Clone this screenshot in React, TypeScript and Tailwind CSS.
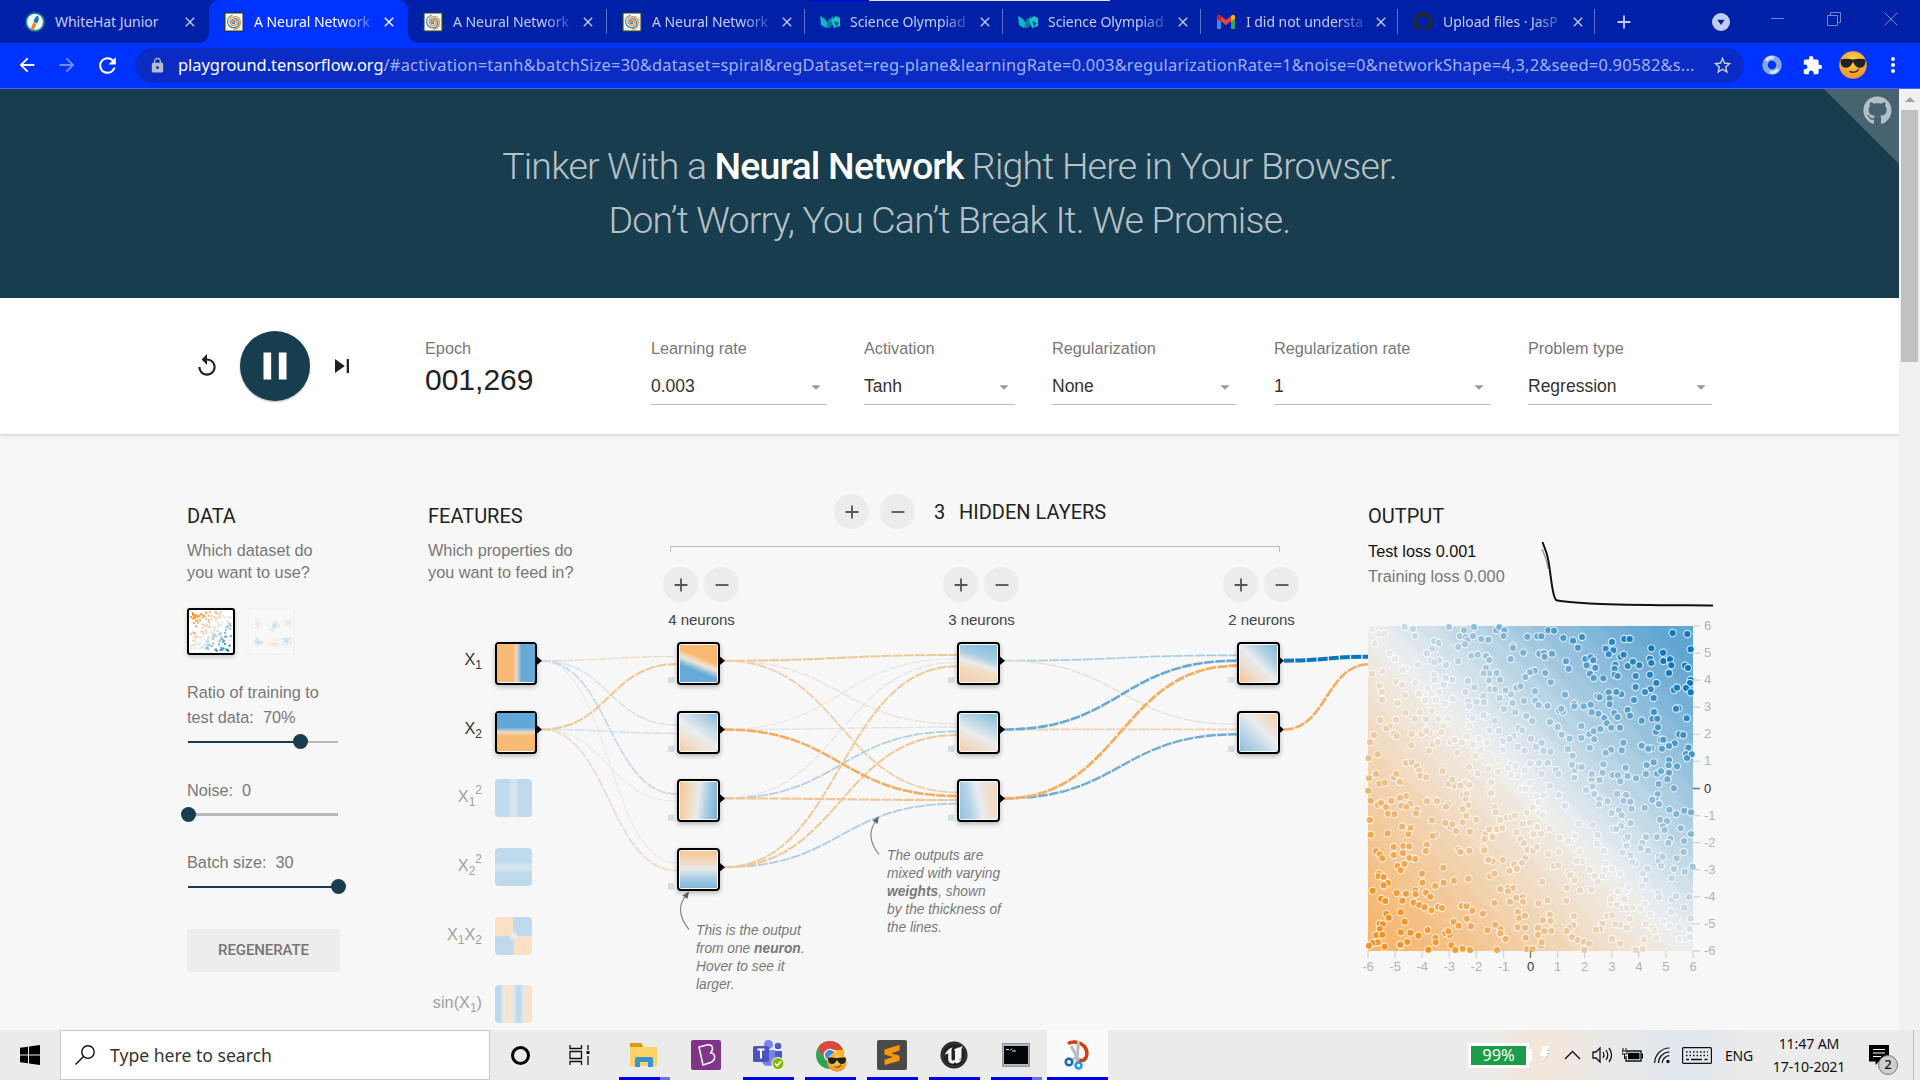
import React from "react";
import {
  MdAdd, MdArrowBack, MdArrowForward, MdArrowDropDown, MdClose, MdExtension, MdLock,
  MdMoreVert, MdPause, MdRefresh, MdRemove, MdReplay, MdSkipNext, MdStarBorder,
} from "react-icons/md";
import { FaGithub } from "react-icons/fa";

const UI = "font-['Noto_Sans',sans-serif]";

/* ---------- colour scale ---------- */
type RGB = [number, number, number];
const ORANGE: RGB = [245, 147, 34];
const NEUTRAL: RGB = [232, 234, 235];
const BLUE: RGB = [8, 119, 189];
const mix = (a: RGB, b: RGB, t: number): RGB => [a[0] + (b[0] - a[0]) * t, a[1] + (b[1] - a[1]) * t, a[2] + (b[2] - a[2]) * t];
const css = (c: RGB) => `rgb(${c.map((v) => Math.round(v)).join(",")})`;
const scale = (v: number): RGB => {
  const t = Math.max(-1, Math.min(1, v));
  return t < 0 ? mix(NEUTRAL, ORANGE, -t) : mix(NEUTRAL, BLUE, t);
};
const soft = (v: number) => css(mix([247, 247, 247], scale(v), 0.63));

/* ---------- browser chrome ---------- */
const Spiral = () => (
  <svg viewBox="0 0 20 20" className="h-5 w-5" fill="none">
    <rect width="20" height="20" fill="#183d4e" />
    <rect x="1.500" y="1.500" width="17" height="17" fill="#fbf6ec" />
    <path d="M10 10.500c-1.200 0-1.200-2 .3-2.200 2-.2 3.200 1.500 2.600 3.200-.8 2.200-3.800 2.800-5.600 1C5 10 6 6 9 5c4-1.300 7.500 1.500 7.300 5.500-.2 4-3 6.500-6.500 6.700" stroke="#f08f2c" strokeWidth="1.300" />
    <path d="M10 9.700c1.200.2 1 1.900-.2 2-1.600 0-2.400-1.700-1.800-3.100.9-2 3.600-2.600 5.300-1 2.300 2.200 1.800 5.800-.8 7.300-3.600 2-8 0-8.800-4C3 7.500 5 4.300 8.500 3.200" stroke="#2f86c4" strokeWidth="1.200" />
  </svg>
);
const Rocket = () => (
  <svg viewBox="0 0 20 20" className="h-5 w-5">
    <circle cx="10" cy="10" r="9.800" fill="#128a96" />
    <circle cx="10" cy="10" r="8" fill="#f4f8f8" />
    <path d="M12.500 3.500c2 2 1.500 5-.5 8l-3.500-1.500C9 7 10 5 12.500 3.500z" fill="#1c7f90" />
    <path d="M8.300 10.500l3 1.500-2.500 6-3-1z" fill="#f57c1f" />
  </svg>
);
const Science = () => (
  <svg viewBox="0 0 20 20" className="h-5 w-5">
    <path d="M0 4l5 3 4 6-3 3-5-3z" fill="#14b5c8" />
    <path d="M6 16l2-8 5-4 1 8-5 4z" fill="#0c7f9e" />
    <path d="M11 8l5-4 4 2v8l-6 2z" fill="#17c3cf" />
    <path d="M14 9l5 2-3 4z" fill="#0b5f80" />
  </svg>
);
const Gmail = () => (
  <svg viewBox="0 0 20 20" className="h-5 w-5">
    <path d="M1 5v12h4V8z" fill="#4285f4" />
    <path d="M15 8v9h4V5z" fill="#34a853" />
    <path d="M1 6.500V4.500C1 3 2.800 2.500 4 3.300L10 8l6-4.700c1.200-.8 3-.3 3 1.200v2L10 13z" fill="#ea4335" />
    <path d="M15 4.200l1-.9c1.200-.8 3-.3 3 1.200v2L15 9.500z" fill="#fbbc04" />
    <path d="M1 6.500V4.500C1 3 2.500 2.600 3.600 3L5 4.200v5.300z" fill="#c5221f" />
  </svg>
);

const tabs: { icon: React.ReactNode; title: string; active?: boolean; sep?: boolean; fade?: boolean; w: string }[] = [
  { icon: <Rocket />, title: "WhiteHat Junior", w: "w-[199px]" },
  { icon: <Spiral />, title: "A Neural Network", active: true, fade: true, w: "w-[199px]" },
  { icon: <Spiral />, title: "A Neural Network", sep: true, fade: true, w: "w-[199px]" },
  { icon: <Spiral />, title: "A Neural Network", sep: true, fade: true, w: "w-[198px]" },
  { icon: <Science />, title: "Science Olympiad", sep: true, fade: true, w: "w-[198px]" },
  { icon: <Science />, title: "Science Olympiad", sep: true, fade: true, w: "w-[198px]" },
  { icon: <Gmail />, title: "I did not understa", sep: true, fade: true, w: "w-[197px]" },
  { icon: <FaGithub className="h-5 w-5 text-[#24292e]" />, title: "Upload files · JasP", sep: true, fade: true, w: "w-[197px]" },
];

const TabStrip = () => (
  <div className={`relative flex h-[43px] items-end bg-[#0020a8] pl-[10px] text-[14px] text-[#c3cdf2] ${UI}`}>
    <div className="absolute top-0 left-[809px] h-px w-[60px] bg-[#0000e6]" />
    <div className="absolute top-0 left-[869px] h-px w-[241px] bg-[#dfe3f2]" />
    {tabs.map((t, i) => (
      <div key={i} className={`relative flex h-[43px] shrink-0 items-center pl-[15px] ${t.w} ${t.active ? "rounded-t-[10px] bg-[#0033ff] text-white" : ""}`}>
        {t.active && (
          <>
            <div className="absolute bottom-0 -left-[10px] h-[10px] w-[10px] bg-[radial-gradient(circle_at_0_0,#0020a8_9.500px,#0033ff_10px)]" />
            <div className="absolute -right-[10px] bottom-0 h-[10px] w-[10px] bg-[radial-gradient(circle_at_100%_0,#0020a8_9.500px,#0033ff_10px)]" />
          </>
        )}
        <span className="w-5">{t.icon}</span>
        <span className={`ml-[10px] w-[120px] pb-px tracking-[-0.05px] whitespace-nowrap ${t.fade ? "[mask-image:linear-gradient(to_right,black_76%,rgba(0,0,0,0.15))]" : ""}`}>{t.title}</span>
        <MdClose className="ml-[7px] h-4 w-4" />
        {t.sep && <div className="absolute right-0 h-[25px] w-px bg-[#5a6fc8]" />}
      </div>
    ))}
    <div className="flex h-[43px] grow items-center">
      <MdAdd className="ml-[18px] h-[22px] w-[22px]" />
      <svg viewBox="0 0 18 18" className="ml-[77px] h-[18px] w-[18px]">
        <circle cx="9" cy="9" r="9" fill="#c3cdf2" />
        <path d="M5.300 6.800h7.400L9 12z" fill="#0020a8" />
      </svg>
      <div className="mb-[7px] ml-[41px] h-px w-[13px] bg-[#6f80cc]" />
      <svg viewBox="0 0 14 14" className="mb-[6px] ml-[43px] h-[14px] w-[14px]" fill="none" stroke="#7585cf">
        <path d="M.5 3.500h10v10H.5zM3.500 3.500v-3h10v10h-3" />
      </svg>
      <svg viewBox="0 0 14 14" className="mb-[6px] ml-[43px] h-[14px] w-[14px]" fill="none" stroke="#7585cf">
        <path d="M.5.5l13 13M13.500.5l-13 13" />
      </svg>
    </div>
  </div>
);

const CoolFace = ({ className }: { className: string }) => (
  <svg viewBox="0 0 28 28" className={className}>
    <defs>
      <radialGradient id="face" cx=".5" cy=".35" r=".7"><stop offset="0" stopColor="#fcd64c" /><stop offset="1" stopColor="#ee8d2f" /></radialGradient>
    </defs>
    <circle cx="14" cy="14" r="13.800" fill="url(#face)" />
    <path d="M1.500 8.500c4-1 8-.8 12.500 0 4.500-.8 8.500-1 12.500 0 .3 5-1.500 8-5 8.300-4 .2-6-2.500-7.500-6-1.500 3.500-3.500 6.200-7.500 6C3 16.500 1.200 13.500 1.500 8.500z" fill="#222" />
    <path d="M11 20.500c3 1.500 7 .8 8.500-2.200" fill="none" stroke="#5a3413" strokeWidth="1.500" strokeLinecap="round" />
  </svg>
);

const Toolbar = () => (
  <div className={`flex h-[46px] items-center border-b border-[#3f66f5] bg-[#0033ff] pb-px text-white ${UI}`}>
    <MdArrowBack className="ml-[16px] h-[22px] w-[22px]" />
    <MdArrowForward className="ml-[18px] h-[22px] w-[22px] text-[#6f8dfb]" />
    <MdRefresh className="ml-[17px] h-[25px] w-[25px]" />
    <div className="ml-[15px] flex h-[35px] w-[1609px] items-center rounded-full bg-[#0a2cc4] text-[16.400px] text-[#a3b1ea]">
      <MdLock className="ml-[14px] h-[17px] w-[17px] text-[#b6bbca]" />
      <div className="ml-[12px] w-[1528px] tracking-[0.215px] whitespace-nowrap">
        <span className="tracking-normal text-white">playground.tensorflow.org</span>/#activation=tanh&amp;batchSize=30&amp;dataset=spiral&amp;regDataset=reg-plane&amp;learningRate=0.003&amp;regularizationRate=1&amp;noise=0&amp;networkShape=4,3,2&amp;seed=0.90582&amp;s...
      </div>
      <MdStarBorder className="ml-[6px] h-[21px] w-[21px] text-[#d2d2cf]" />
    </div>
    <svg viewBox="0 0 20 20" className="ml-[18px] h-5 w-5">
      <circle cx="10" cy="10" r="7" fill="none" stroke="#86a7d8" strokeWidth="5.500" />
      <path d="M4 6a7 7 0 0 1 8-3M16 14a7 7 0 0 1-8 3" fill="none" stroke="#d6e4f5" strokeWidth="3" />
    </svg>
    <MdExtension className="ml-[20px] h-[21px] w-[21px]" />
    <CoolFace className="ml-[16px] h-7 w-7" />
    <MdMoreVert className="ml-[14px] h-6 w-6" />
  </div>
);

/* ---------- page ---------- */
const Hero = () => (
  <header className="relative flex h-[209px] shrink-0 flex-col items-center justify-center bg-[#183d4e] pb-px text-center font-['Roboto',sans-serif] text-[37.500px] leading-[54px] font-light tracking-[-0.81px] text-white/70">
    <h1>
      Tinker With a <b className="font-medium text-white">Neural Network</b> Right Here in Your Browser.
      <br />
      Don’t Worry, You Can’t Break It. We Promise.
    </h1>
    <div className="absolute top-0 right-0 h-[75px] w-[75px] bg-[#486370] [clip-path:polygon(0_0,100%_0,100%_100%)]" />
    <FaGithub className="absolute top-[7px] right-[7px] h-[29px] w-[29px] text-[#b3c0c6]" />
  </header>
);

const Select = ({ label, value, cls }: { label: string; value: string; cls: string }) => (
  <div className={`shrink-0 pt-[39px] text-[16.250px] leading-[22px] text-[#777] ${cls}`}>
    <div>{label}</div>
    <div className="mt-[15px] flex h-[31px] justify-between border-b border-[#bbb] text-[17.500px] leading-[24px] text-[#333]">
      {value}
      <MdArrowDropDown className="mt-[2px] h-[22px] w-[22px] text-[#999]" />
    </div>
  </div>
);

const Controls = () => (
  <section className="relative z-10 flex h-[137px] shrink-0 border-b border-[#ddd] bg-white pl-[194px] shadow-[0_1px_4px_rgba(0,0,0,0.12)]">
    <MdReplay className="mt-[55px] h-[26px] w-[26px] shrink-0 text-[#222]" />
    <div className="mt-[33px] ml-[20px] flex h-[70px] w-[70px] shrink-0 items-center justify-center rounded-full bg-[#183d4e] shadow-[0_1px_2px_rgba(0,0,0,0.3)]">
      <MdPause className="h-[46px] w-[46px] text-white" />
    </div>
    <MdSkipNext className="mt-[54px] ml-[18px] h-[28px] w-[28px] shrink-0 text-[#222]" />
    <div className="ml-[69px] w-[226px] shrink-0 pt-[39px] text-[16.250px] leading-[22px] text-[#777]">
      Epoch
      <div className="mt-[4px] text-[30px] leading-[34px] text-[#222]">001,269</div>
    </div>
    <Select label="Learning rate" value="0.003" cls="w-[176px]" />
    <Select label="Activation" value="Tanh" cls="ml-[37px] w-[151px]" />
    <Select label="Regularization" value="None" cls="ml-[37px] w-[184px]" />
    <Select label="Regularization rate" value="1" cls="ml-[38px] w-[216px]" />
    <Select label="Problem type" value="Regression" cls="ml-[38px] w-[184px]" />
  </section>
);

const Title = ({ children }: { children: React.ReactNode }) => (
  <h2 className="font-['Roboto',sans-serif] text-[20px] leading-[24px] whitespace-nowrap text-[#222]">{children}</h2>
);

const Slider = ({ value, cls, rest = "h-[2px]" }: { value: number; cls: string; rest?: string }) => (
  <div className={`relative ml-px flex h-[15px] w-[150px] items-center ${cls}`}>
    <div className={`w-full bg-[#b9b9b9] ${rest}`} />
    <div className="absolute left-0 h-[2px] bg-[#183d4e]" style={{ width: `${value * 100}%` }} />
    <div className="absolute -ml-[7.500px] h-[15px] w-[15px] rounded-full bg-[#183d4e]" style={{ left: `${value * 100}%` }} />
  </div>
);

const rand = (seed: number) => () => {
  seed = (seed + 0x6d2b79f5) | 0;
  let t = Math.imul(seed ^ (seed >>> 15), 1 | seed);
  t = (t + Math.imul(t ^ (t >>> 7), 61 | t)) ^ t;
  return ((t ^ (t >>> 14)) >>> 0) / 4294967296;
};
const planeDots = (() => {
  const r = rand(11);
  return Array.from({ length: 190 }, () => {
    const x = 1 + r() * 40, y = 1 + r() * 39;
    return { x, y, v: (x + y - 42) / 34 };
  });
})();
const gaussDots = (() => {
  const r = rand(5);
  const c: [number, number, number][] = [[8, 13, -1], [24, 15, 1], [38, 12, -1], [9, 31, 1], [24, 33, -1], [37, 30, 1]];
  return c.flatMap(([x, y, v]) =>
    Array.from({ length: 26 }, () => {
      const a = r() * 6.283, d = r() * 7;
      return { x: x + Math.cos(a) * d, y: y + Math.sin(a) * d * 0.8, v: v * (1 - d / 9) };
    }),
  );
})();
const Dots = ({ dots }: { dots: { x: number; y: number; v: number }[] }) => (
  <svg viewBox="0 0 44 43" className="h-[43px] w-[44px]">
    {dots.map((d, i) => <rect key={i} x={d.x} y={d.y} width="1.900" height="1.900" fill={css(scale(d.v))} />)}
  </svg>
);

const DataColumn = () => (
  <div className="w-[153px] shrink-0 pt-[69px] text-[16.250px] text-[#777]">
    <Title>DATA</Title>
    <p className="mt-[11px] leading-[22px] whitespace-nowrap">Which dataset do<br />you want to use?</p>
    <div className="mt-[25px] flex gap-[12px]">
      <div className="h-[47px] w-[48px] rounded-[3px] border-2 border-black bg-white shadow-[0_2px_5px_rgba(0,0,0,0.2)]"><Dots dots={planeDots} /></div>
      <div className="h-[47px] w-[48px] rounded-[3px] border-2 border-[#f2f2f2] bg-[#f8f8f8]"><div className="opacity-20"><Dots dots={gaussDots} /></div></div>
    </div>
    <p className="mt-[25px] leading-[25px] whitespace-nowrap">Ratio of training to<br />test data:&nbsp; 70%</p>
    <Slider value={0.75} cls="mt-[4px]" />
    <p className="mt-[29px] leading-[25px]">Noise:&nbsp; 0</p>
    <Slider value={0} cls="mt-[4px]" rest="h-[3px]" />
    <p className="mt-[28px] leading-[25px]">Batch size:&nbsp; 30</p>
    <Slider value={1} cls="mt-[4px]" />
    <div className="mt-[35px] flex h-[43px] items-center justify-center rounded-[3px] bg-[#ededed] font-['Roboto',sans-serif] text-[15px] font-medium tracking-[-0.1px] text-[#757575]">REGENERATE</div>
  </div>
);

const Sub = ({ children }: { children: string }) => <sub className="bottom-[-4px] text-[12px]">{children}</sub>;
const Sup = ({ children }: { children: string }) => <sup className="top-[-8px] text-[12px]">{children}</sup>;

const features: { label: React.ReactNode; on?: boolean; art: string }[] = [
  { label: <>X<Sub>1</Sub></>, on: true, art: "bg-[linear-gradient(90deg,#f8ba74_42%,#e9dccb_52%,#66a9d7_64%)]" },
  { label: <>X<Sub>2</Sub></>, on: true, art: "bg-[linear-gradient(180deg,#5fa8d7_38%,#e9dccb_50%,#f8ba74_60%)]" },
  { label: <>X<Sub>1</Sub><Sup>2</Sup></>, art: "bg-[linear-gradient(90deg,#bfdaec_36%,#d5e5ee_44%,#d5e5ee_56%,#bfdaec_64%)]" },
  { label: <>X<Sub>2</Sub><Sup>2</Sup></>, art: "bg-[linear-gradient(180deg,#bfdaec_36%,#d5e5ee_44%,#d5e5ee_56%,#bfdaec_64%)]" },
  { label: <>X<Sub>1</Sub>X<Sub>2</Sub></>, art: "bg-[radial-gradient(circle,#e6ecef_8%,transparent_20%),conic-gradient(#bfdaec_0_24%,#fae0c4_26%_49%,#bfdaec_51%_74%,#fae0c4_76%_99%,#bfdaec)]" },
  { label: <>sin(X<Sub>1</Sub>)</>, art: "bg-[linear-gradient(90deg,#bfdaec_14%,#f0ebe3_24%,#f9e3cb_32%,#f9e6d1_42%,#e4e9ec_50%,#bfdaec_60%,#bfdaec_68%,#eceae6_78%,#f9e3cb_86%)]" },
];

const FeatureColumn = () => (
  <div className="ml-[88px] w-[152px] shrink-0 pt-[69px] text-[16.250px] text-[#777]">
    <Title>FEATURES</Title>
    <p className="mt-[11px] leading-[22px] whitespace-nowrap">Which properties do<br />you want to feed in?</p>
    <div className="mt-[59px]">
      {features.map((f, i) => (
        <div key={i} className="flex h-[68.700px] gap-[13px]">
          <div className={`w-[54px] pt-[6px] text-right leading-[22px] whitespace-nowrap ${f.on ? "text-[#333]" : "text-[#a0a0a0]"}`}>{f.label}</div>
          {f.on ? (
            <div className="h-[43px] w-[42px] rounded-[4px] border-2 border-black bg-white shadow-[0_2px_5px_rgba(0,0,0,0.25)]"><div className={`h-[38px] w-[38px] ${f.art}`} /></div>
          ) : (
            <div className={`h-[38px] w-[37px] rounded-[4px] ${f.art}`} />
          )}
        </div>
      ))}
    </div>
  </div>
);

const RoundButton = ({ kind }: { kind: "add" | "remove" }) => (
  <div className="flex h-[35px] w-[35px] shrink-0 items-center justify-center rounded-full bg-[#ececec] text-[#555]">
    {kind === "add" ? <MdAdd className="h-[22px] w-[22px]" /> : <MdRemove className="h-[22px] w-[22px]" />}
  </div>
);

const layers: string[][] = [
  [
    "bg-[linear-gradient(202deg,#f8b96f_36%,#f0e6da_50%,#66abd8_66%)]",
    "bg-[linear-gradient(35deg,#f3cfa8,#f0e2d3_28%,#e9edf1_48%,#c3d9e9_70%,#88badb)]",
    "bg-[linear-gradient(96deg,#f6cb9b_5%,#f2dcc6_30%,#e7ebef_50%,#a9cce3_72%,#72b0d8)]",
    "bg-[linear-gradient(180deg,#f6cb9b_8%,#efdccc_35%,#e3e9ee_50%,#a7cbe2_75%,#7fb6da)]",
  ],
  [
    "bg-[linear-gradient(197deg,#8dbfde_10%,#a9cee3_35%,#ecece9_52%,#f2dcc5_65%,#f3cfa8)]",
    "bg-[linear-gradient(205deg,#8dbfde_5%,#b9d5e7_30%,#ebedef_56%,#f1dfcd_75%,#f3d0aa)]",
    "bg-[linear-gradient(78deg,#92c0de,#b5d3e6_28%,#e9edf0_52%,#efdfd0_75%,#f2d7b9)]",
  ],
  [
    "bg-[linear-gradient(45deg,#f4c594,#f0dfd0_30%,#e9edf1_50%,#b5d2e6_70%,#82b8db)]",
    "bg-[linear-gradient(45deg,#8ebfde,#bdd7e8_32%,#e9ecf0_58%,#efe0d2_75%,#f3cea5)]",
  ],
];

type Link = [number, number, number, number, string, number];
const R = [660.7, 729.5, 798.4, 867.2];
const links: Link[] = [
  [541, R[0], 677, 863, "#e3e7ea", 1.1],
  [541, R[1], 677, 801.3, "#e5e7e9", 1.1],
  [541, R[1], 677, 733.4, "#d3e2ea", 1.5],
  [541, R[0], 677, 656.6, "#ecdac8", 1.4],
  [541, R[0], 677, 725, "#d3e2ec", 1.4],
  [541, R[0], 677, 794, "#c2d8e7", 1.6],
  [541, R[1], 677, 870.5, "#edd8c3", 1.5],
  [541, R[1], 677, 664, "#f0c793", 2],
  [724, R[1], 957, 658.7, "#e4e6e8", 1.1],
  [724, R[2], 957, 662.5, "#dfe5e9", 1.2],
  [724, R[1], 957, 727.3, "#dde6eb", 1.4],
  [724, R[0], 957, 723.8, "#ebe0d6", 1.3],
  [724, R[0], 957, 655, "#f0c797", 2],
  [724, R[0], 957, 792.3, "#efcfab", 1.8],
  [724, R[2], 957, 731.4, "#b0cee2", 1.7],
  [724, R[2], 957, 800, "#f1c592", 2.1],
  [724, R[3], 957, 803.7, "#aecde2", 1.8],
  [724, R[3], 957, 666.3, "#f0c99b", 2],
  [724, R[3], 957, 735, "#f0c797", 2],
  [724, R[1], 957, 796, "#f4ad5e", 2.6],
  [1004, R[0], 1237, 655.3, "#aacce1", 1.7],
  [1004, R[0], 1237, 724.3, "#ebddd0", 1.3],
  [1004, R[1], 1237, 729.3, "#efd2b0", 1.8],
  [1004, R[1], 1237, 660.7, "#68a8d5", 2.6],
  [1004, R[2], 1237, 734.3, "#6fadd5", 2.4],
  [1004, R[2], 1237, 665.7, "#f4ae60", 2.8],
  [1284, R[0], 1369, 656.7, "#0877bd", 4],
  [1284, R[1], 1369, 664.3, "#f4ac5a", 2.6],
];
const exits: [number, number][] = [
  [537, R[0]], [537, R[1]],
  [720, R[0]], [720, R[1]], [720, R[2]], [720, R[3]],
  [1000, R[0]], [1000, R[1]], [1000, R[2]],
  [1279, R[0]], [1279, R[1]],
];

const Wires = () => (
  <svg viewBox="0 435 1900 595" className="pointer-events-none absolute top-px left-0 h-[595px] w-[1900px]" fill="none">
    {links.map(([x1, y1, x2, y2, c, w], i) => {
      const m = (x1 + x2) / 2;
      return <path key={i} d={`M${x1} ${y1}C${m} ${y1} ${m} ${y2} ${x2} ${y2}`} stroke={c} strokeWidth={w} strokeDasharray="10 1.250" />;
    })}
    {exits.map(([x, y], i) => <path key={i} d={`M${x - 1} ${y - 5}l6 5-6 5z`} fill="#000" />)}
    {[[668, 4], [948, 3], [1228, 2]].map(([x, n]) =>
      Array.from({ length: n }, (_, i) => <rect key={`${x}-${i}`} x={x} y={677 + i * 68.8} width="6.200" height="6.200" fill={x === 1228 && i === 0 ? "#dde4e8" : "#d0dee7"} />),
    )}
    <path d="M689 929.500Q674 911 685.500 896M879 854.500Q864.500 836 876 821" stroke="#888" strokeWidth="1.200" />
    <path d="M689 891.500l-6.500 4 5 3.600zM879 816.500l-6.500 4 5 3.600z" fill="#666" />
  </svg>
);

const Network = () => (
  <div className="relative w-[788px] shrink-0 pt-[59px]">
    <div className="ml-[254px] flex items-center">
      <RoundButton kind="add" />
      <div className="ml-[11px]"><RoundButton kind="remove" /></div>
      <div className="ml-[19px] w-[25px]"><Title>3</Title></div>
      <Title>HIDDEN LAYERS</Title>
    </div>
    <div className="mt-[17px] ml-[90px] h-[6px] w-[610px] border-x border-t border-[#bdbdbd]" />
    <div className="mt-[15px] ml-[83px] flex gap-[203px]">
      {layers.map((nodes, i) => (
        <div key={i} className="w-[77px]">
          <div className="flex gap-[6px]"><RoundButton kind="add" /><RoundButton kind="remove" /></div>
          <div className="mt-[8px] text-center text-[15px] leading-[20px] whitespace-nowrap text-[#444]">{nodes.length} neurons</div>
          <div className="mt-[12px] ml-[14px]">
            {nodes.map((art, j) => (
              <div key={j} className="h-[68.700px]">
                <div className="h-[43px] w-[43px] rounded-[4px] border-2 border-black bg-[#fafafa] p-px shadow-[0_2px_5px_rgba(0,0,0,0.28)]"><div className={`h-full w-full ${art}`} /></div>
              </div>
            ))}
          </div>
        </div>
      ))}
    </div>
    <p className="absolute top-[487px] left-[116px] text-[13.750px] leading-[18px] whitespace-nowrap text-[#777] italic">
      This is the output<br />from one <b>neuron</b>.<br />Hover to see it<br />larger.
    </p>
    <p className="absolute top-[412px] left-[307px] text-[13.750px] leading-[18px] whitespace-nowrap text-[#777] italic">
      The outputs are<br />mixed with varying<br /><b>weights</b>, shown<br />by the thickness of<br />the lines.
    </p>
  </div>
);

/* Sample positions, three units per pixel, origin at the panel's corner (54, 318). */
const samples = `65,327 88,342 103,341 74,370 164,320 189,327 195,348 297,321 342,331 372,321 330,349 347,351 353,360 369,348 345,373 325,381 394,357 415,359 439,331 448,322 463,331 461,348 253,364 266,369 255,386 246,386 231,400 243,422 267,421 253,427 288,435 324,424 364,407 383,404 408,408 418,420 408,443 489,378 489,384 482,417 520,398 532,350 562,349 574,349 595,331 612,332 640,354 669,362 696,351 684,383 606,401 568,401 582,399 584,410 648,424 656,446 586,459 554,452 540,457 526,471 602,487 767,386 786,366 790,391 776,403 823,357 839,357 812,410 821,404 706,417 722,412 730,421 710,436 736,443 720,461 731,474 760,475 796,434 794,446 794,464 803,468 833,438 849,425 868,436 857,468 904,385 900,416 904,429 939,398 940,423 960,418 964,436 957,459 900,464 919,489 968,339 1012,342 1022,388 1005,437 1014,444 1022,480 1020,489 1008,504 1022,517 972,510 981,503 985,565 978,566 911,534 902,508 885,516 857,501 852,540 814,523 799,516 776,517 779,535 779,553 742,529 749,532 722,554 701,559 672,551 673,559 645,524 593,558 555,514 556,542 566,555 522,542 488,549 462,567 496,577 529,588 547,603 507,623 517,631 434,602 409,590 401,586 449,534 483,523 467,511 499,503 512,499 450,479 440,459 418,460 401,460 417,481 421,507 435,508 400,528 402,546 380,545 374,502 354,482 346,516 355,544 358,559 359,588 368,595 359,618 307,479 288,474 253,465 254,480 233,505 245,520 267,515 281,494 308,537 285,551 258,541 225,541 207,521 196,488 163,446 168,445 204,435 158,450 119,400 135,416 98,454 66,461 89,498 96,515 96,539 138,485 156,494 165,525 142,549 91,600 138,599 166,578 194,596 210,577 228,598 245,572 265,596 293,595 280,619 268,641 274,636 231,627 239,638 215,643 185,642 229,633 132,641 140,648 119,619 109,625 72,645 60,667 56,715 83,703 57,775 78,762 88,791 104,788 131,772 139,761 150,786 55,812 168,729 185,727 201,738 208,752 211,767 229,772 184,676 237,692 248,673 263,666 278,754 302,666 313,660 322,698 335,667 351,649 368,674 392,691 387,656 411,667 376,708 419,631 447,632 459,663 491,648 479,657 504,680 524,692 543,656 558,680 575,668 581,692 602,695 445,718 459,690 415,746 444,755 483,733 497,738 473,745 524,751 567,730 593,728 541,730 575,762 618,750 625,762 600,797 645,857 673,773 674,750 666,734 668,707 654,687 659,656 635,644 623,621 600,606 627,572 639,575 634,566 694,618 694,654 719,683 718,642 731,634 733,658 751,627 763,594 771,610 784,623 745,581 725,577 793,579 803,591 810,623 833,570 840,587 820,668 815,691 783,689 767,698 760,733 758,758 749,780 725,776 725,762 728,799 708,810 733,822 748,838 747,853 686,740 695,741 773,844 788,765 804,766 811,784 827,743 833,768 858,775 801,821 828,825 821,842 841,845 845,866 807,871 815,886 785,879 884,863 875,602 907,596 912,576 922,596 918,635 924,622 933,659 940,659 936,686 904,685 895,686 875,677 890,735 911,727 888,762 921,761 933,754 957,720 956,736 957,758 952,778 981,739 926,792 972,805 923,823 918,840 907,839 927,852 1010,595 988,643 1000,645 974,670 957,678 1015,683 1008,702 1025,703 1011,714 958,869 979,882 1003,872 1023,877 930,899 951,903 939,919 944,930 992,925 1023,942 921,951 888,951 961,956 955,969 1002,963 1001,996 980,1015 927,1009 926,1022 938,1010 933,1038 972,1047 1004,1055 1028,1040 965,1075 877,969 872,984 895,992 857,1031 847,1026 842,1006 830,977 827,957 817,998 833,950 842,909 815,911 813,918 790,927 799,927 687,911 728,914 743,945 741,971 761,992 676,947 663,965 655,964 629,953 599,926 577,885 546,829 560,829 582,826 627,824 566,846 513,806 530,796 540,789 503,769 483,766 526,807 423,820 420,793 424,786 383,760 357,742 346,787 345,790 358,795 313,797 295,792 307,779 331,797 339,825 350,822 347,838 355,855 338,867 349,888 338,907 379,899 360,935 318,933 301,920 286,909 307,913 294,853 288,860 261,843 231,843 246,901 256,946 248,948 231,974 228,993 201,869 198,880 180,852 168,828 150,833 124,842 154,857 169,860 84,854 62,842 93,849 108,862 114,881 133,883 60,900 62,944 113,940 156,920 182,924 175,943 160,978 177,979 131,981 159,999 131,1005 179,1014 196,1017 78,994 89,1003 97,1015 163,1032 142,1038 152,1051 280,1043 216,1061 217,1088 87,1061 86,1069 101,1071 114,1089 101,1096 68,1112 93,1136 106,1143 140,1119 168,1121 157,1142 196,1111 197,1122 228,1118 241,1130 191,1148 208,1155 224,1162 245,1171 264,1161 276,1164 256,1098 281,1088 312,1082 355,1076 109,1182 116,1193 152,1177 164,1205 89,1211 99,1213 90,1227 79,1245 97,1244 83,1267 67,1269 57,1277 104,1280 152,1237 181,1238 205,1247 172,1266 152,1277 151,1274 233,1230 256,1254 257,1267 235,1289 304,1276 316,1290 338,1286 360,1290 286,1240 299,1245 295,1234 311,1206 326,1217 363,1219 351,1196 335,1158 349,1159 367,1172 399,1181 412,1231 436,1214 452,1228 451,1240 467,1257 441,1290 433,1149 420,1069 433,1061 412,1020 428,1023 401,984 403,991 326,989 331,996 358,992 407,942 427,946 428,951 404,957 418,928 434,861 437,877 441,928 451,900 457,925 470,893 484,892 495,887 519,911 540,908 530,878 548,862 568,880 579,885 562,921 573,941 550,943 500,937 512,957 521,970 533,989 549,992 561,981 526,1014 516,1028 493,1033 500,1046 478,1053 458,1019 451,1107 474,1103 489,1104 474,1114 480,1145 499,1133 518,1131 519,1145 504,1176 507,1194 525,1187 503,1222 525,1223 527,1253 530,1287 548,1287 573,1277 575,1267 564,1244 564,1223 579,1201 600,1184 602,1203 604,1233 583,1234 593,1141 566,1150 577,1085 611,1039 625,1036 627,995 595,1002 649,1142 650,1103 655,1057 661,1065 674,1081 690,1111 724,1109 743,1085 757,1068 734,1068 719,1050 696,1024 679,1023 688,994 767,1031 786,1046 765,1050 811,1062 804,1114 830,1111 836,1102 823,1138 790,1132 783,1150 801,1155 817,1165 830,1164 848,1163 871,1167 885,1151 876,1098 888,1079 879,1060 893,1046 925,1119 927,1132 966,1140 978,1129 1017,1131 963,1175 1003,1163 901,1184 941,1204 959,1218 1022,1196 1019,1226 988,1223 907,1223 887,1213 919,1253 913,1232 989,1257 1008,1256 1020,1251 882,1259 878,1287 857,1290 811,1271 786,1257 831,1223 810,1214 795,1213 771,1189 787,1186 757,1211 750,1227 738,1229 672,1189 670,1216 657,1223 650,1233 666,1251 684,1260 701,1265 717,1271 703,1290 839,1196 783,1138 415,1019`
  .split(/\s+/)
  .map((p) => p.split(",").map(Number));

const BANDS = 28;
const ticks = [6, 5, 4, 3, 2, 1, 0, -1, -2, -3, -4, -5, -6];

const Heatmap = () => (
  <svg viewBox="1360 618 360 360" className="-ml-2 block h-[360px] w-[360px]" fontSize="13" fontFamily="'Liberation Sans', sans-serif">
    <defs>
      <linearGradient id="plane" x1="0" y1="1" x2="1" y2="0">
        {Array.from({ length: BANDS }, (_, i) => {
          const c = soft((((i + 0.5) / BANDS) * 2 - 1) * 1.15);
          return (
            <React.Fragment key={i}>
              <stop offset={(i + 0.15) / BANDS} stopColor={c} />
              <stop offset={(i + 0.85) / BANDS} stopColor={c} />
            </React.Fragment>
          );
        })}
      </linearGradient>
    </defs>
    <rect x="1368" y="626" width="325" height="325" fill="url(#plane)" />
    {samples.map(([px, py], i) => {
      const v = ((px - 54) / 975 - (1293 - 318 - (1293 - py)) / 975) * 1.25;
      return <circle key={i} cx={1350 + px / 3} cy={520 + py / 3} r="3.600" fill={css(scale(v))} stroke="#fff" strokeOpacity="0.75" strokeWidth="1.200" />;
    })}
    {ticks.map((t) => {
      const o = ((6 - t) / 12) * 325;
      const line = t === 0 ? "#777" : "#d4d4d4";
      const fill = t === 0 ? "#333" : "#b3b3b3";
      return (
        <g key={t}>
          <path d={`M1693 ${626 + o}h7M${1693 - o} 951v7`} stroke={line} strokeWidth="1.300" />
          <text x="1704" y={630 + o} fill={fill}>{t}</text>
          <text x={1693 - o} y="971" textAnchor="middle" fill={fill}>{t}</text>
        </g>
      );
    })}
  </svg>
);

const Output = () => (
  <div className="relative w-[352px] shrink-0 pt-[69px] text-[16.250px] leading-[25px]">
    <Title>OUTPUT</Title>
    <div className="mt-[11px] flex h-[79px] justify-between whitespace-nowrap">
      <div className="text-[#777]"><div className="text-[#111]">Test loss 0.001</div>Training loss 0.000</div>
      <svg viewBox="1540 539 180 79" className="h-[79px] w-[180px]" fill="none">
        <path d="M1542 549c3 6 5 12 6.500 20" stroke="#999" strokeWidth="1.500" />
        <path d="M1542.500 542l4 11c2 6 3 14 4 22s2.500 18 4 22 2 3.500 6 4c14 1.500 26 2.300 40 3 38 1.300 74 1.200 112.500 1.500" stroke="#111" strokeWidth="2" />
      </svg>
    </div>
    <Heatmap />
  </div>
);

/* ---------- taskbar ---------- */
const TaskButton = ({ children, w, line, tail, on }: { children?: React.ReactNode; w: string; line?: string; tail?: boolean; on?: boolean }) => (
  <div className={`relative flex h-[50px] shrink-0 items-center justify-center ${w} ${on ? "bg-[#fafafa]" : ""}`}>
    {children}
    {line && (
      <div className={`absolute bottom-0 flex h-[3px] ${line} bg-[#0000f0]`}>{tail && <div className="ml-auto h-full w-[10px] bg-[#6c6cf6]" />}</div>
    )}
  </div>
);

const Taskbar = () => (
  <footer className={`flex h-[50px] shrink-0 items-center bg-[#ebebeb] bg-[linear-gradient(90deg,transparent_1480px,#f3e6da_1540px,#e9e9ea_1610px,#e0e7ef_1680px,transparent_1760px)] text-[#111] ${UI}`}>
    <div className="flex w-[60px] shrink-0 justify-center">
      <svg viewBox="0 0 20 20" className="h-5 w-5"><path d="M0 2.800l8-1.100v7.800H0zM9 1.500L20 0v9.500H9zM0 10.500h8v7.800l-8-1.100zM9 10.500h11V20L9 18.500z" /></svg>
    </div>
    <div className="flex h-[50px] w-[430px] shrink-0 items-center border border-[#c8c8c8] bg-white pl-[14px]">
      <svg viewBox="0 0 20 20" className="h-5 w-5" fill="none" stroke="#111" strokeWidth="1.400"><circle cx="13" cy="7" r="6.200" /><path d="M8.500 11.500L.5 19.500" /></svg>
      <span className="ml-[15px] text-[17.600px] text-[#333]">Type here to search</span>
    </div>
    <TaskButton w="w-[60px]"><div className="h-[19px] w-[19px] rounded-full border-[3px] border-black" /></TaskButton>
    <TaskButton w="w-[59px]">
      <svg viewBox="0 0 21 20" className="h-5 w-[21px]" fill="none" stroke="#111" strokeWidth="1.300"><path d="M1 0v3.500h11.500V0M1 6.500h11.500v7H1zM1 20v-3.500h11.500V20M19 0v5M19 11v9" /><rect x="17.500" y="6" width="3" height="3" fill="#111" stroke="none" /></svg>
    </TaskButton>
    <TaskButton w="w-[70px]" line="w-[51px]" tail>
      <svg viewBox="0 0 28 24" className="h-6 w-7"><path d="M0 0h11l2 3v5H0z" fill="#dc9a10" /><path d="M0 4h27v19H0z" fill="#fcd466" /><path d="M5 24v-8q0-2 2-2h14q2 0 2 2v8h-5v-5h-8v5z" fill="#3a91d6" /></svg>
    </TaskButton>
    <TaskButton w="w-[54px]">
      <svg viewBox="0 0 30 30" className="h-[30px] w-[30px]"><rect width="30" height="30" rx="2" fill="#813588" /><path d="M8 7l8-2c6-1 7 4 3.500 8 5-.5 6 7 0 9.500l-7.500 2.500z" fill="none" stroke="#fff" strokeWidth="1.500" strokeLinejoin="round" /></svg>
    </TaskButton>
    <TaskButton w="w-[70px]" line="w-[51px]">
      <svg viewBox="0 0 31 30" className="h-[30px] w-[31px]">
        <circle cx="25" cy="6" r="3.300" fill="#5059c9" /><circle cx="15.500" cy="4.500" r="4.500" fill="#7b83eb" />
        <path d="M20 11h9v8q0 5-5 5h-4z" fill="#5059c9" /><path d="M9 10h13v10q0 6-6.500 6T9 20z" fill="#7b83eb" />
        <rect y="6" width="16" height="16" rx="1.500" fill="#4b53bc" />
        <path d="M4.500 9.500h7M8 9.500v9" stroke="#fff" strokeWidth="2" />
        <circle cx="25" cy="23.500" r="6.500" fill="#fff" /><circle cx="25" cy="23.500" r="5.500" fill="#7fba00" /><path d="M22 23.500l2.200 2.300 4-4.500" fill="none" stroke="#fff" strokeWidth="1.600" />
      </svg>
    </TaskButton>
    <TaskButton w="w-[54px]" line="w-[51px]">
      <svg viewBox="0 0 31 31" className="h-[31px] w-[31px]">
        <circle cx="15" cy="15" r="14" fill="#34a353" />
        <path d="M2.900 8A14 14 0 0 1 28 10H15L9 18.500z" fill="#e0463c" />
        <path d="M15 29a14 14 0 0 0 13-19H15l6 9z" fill="#fbc116" />
        <circle cx="15" cy="15" r="6.300" fill="#fff" /><circle cx="15" cy="15" r="5" fill="#4285f4" />
      </svg>
      <CoolFace className="absolute top-[22px] left-[24px] h-5 w-5" />
    </TaskButton>
    <TaskButton w="w-[70px]" line="w-[51px]">
      <svg viewBox="0 0 30 30" className="h-[30px] w-[30px]"><rect width="30" height="30" rx="2" fill="#4a4a4a" /><path d="M22.500 5v5.500L14 13.200l8.500 2.600v5L7.500 25v-5.200L16 17l-8.500-2.500V9.500z" fill="#ff9800" /></svg>
    </TaskButton>
    <TaskButton w="w-[54px]" line="w-[51px]">
      <svg viewBox="0 0 28 28" className="h-7 w-7">
        <circle cx="14" cy="14" r="13.500" fill="#222" /><circle cx="14" cy="14" r="11.800" fill="none" stroke="#555" strokeWidth=".6" />
        <path d="M4.500 14.500C6 10.500 8.500 7.500 12.500 6.500 11.500 8 11.500 9 11.500 10.500V18c0 2 2.500 2 3.500.5V9.500L13.800 8.500l5-2.300V17.500c0 1.500 1 1.800 3.200.3-1.500 3-3.500 4.500-5.500 4.700L15 21.200l-1.800 1.600c-3.500-.3-5-2-5-4.600v-5.500c-1.200-.2-2.500.3-3.700 1.800z" fill="#f4f4f4" />
        <path d="M18 7l5-2c-1.300 1.700-1.500 3-1.500 5v7l-2 1.500-1.500-1z" fill="#f4f4f4" />
      </svg>
    </TaskButton>
    <TaskButton w="w-[70px]" line="w-[51px]" tail>
      <svg viewBox="0 0 28 24" className="h-6 w-7"><rect x=".5" y=".5" width="27" height="23" fill="#aeb8c0" stroke="#8d979f" /><rect x="2" y="3" width="24" height="18" fill="#050505" /><path d="M4 6.500h3M8 7.500l2-2M10 8h4" stroke="#ddd" strokeWidth="1" /></svg>
    </TaskButton>
    <div className="-ml-[4px]">
      <TaskButton w="w-[61px]" line="w-[61px]" on>
        <svg viewBox="0 0 27 30" className="h-[30px] w-[27px]" fill="none">
          <path d="M4 3.500c5-2.500 12-1.500 16 2.500 4.500 5 3.500 13-1.500 14.500-2.500.5-4.500-1-6-3" stroke="#cf3f12" strokeWidth="3.500" />
          <path d="M14.500 1l-1.500 21M7 6l8 14" stroke="#b8bcc0" strokeWidth="3" />
          <path d="M8 20l5-4" stroke="#b8bcc0" strokeWidth="2" />
          <circle cx="5" cy="22" r="3.300" stroke="#0d6cb5" strokeWidth="2.500" /><circle cx="14.500" cy="25.500" r="3" stroke="#1e9bea" strokeWidth="2.500" />
        </svg>
      </TaskButton>
    </div>
    <div className="ml-auto flex h-[50px] w-[452px] shrink-0 items-center">
      <div className="flex h-[25px] w-[61px] items-center justify-center border-[3px] border-white bg-[#1a9c48] text-[16.500px] text-white">99%</div>
      <div className="h-[12px] w-[3px] bg-white" />
      <svg viewBox="0 0 10 18" className="ml-[8px] h-[18px] w-[10px]"><path d="M3 0h6L7 5h3L2 18l2-8H0z" fill="#fff" /><path d="M8 4v5L3 16" stroke="#777" fill="none" strokeDasharray="1 2" /></svg>
      <svg viewBox="0 0 17 10" className="ml-[14px] h-[10px] w-[17px]" fill="none" stroke="#111" strokeWidth="1.400"><path d="M1 9l7.500-7.500L16 9" /></svg>
      <svg viewBox="0 0 22 18" className="ml-[11px] h-[18px] w-[22px]" fill="none" stroke="#111" strokeWidth="1.300"><path d="M1 6h3l4-4v14l-4-4H1zM11 6q2 3 0 6M14 4q3.500 5 0 10M17 2q5 7 0 14" /></svg>
      <svg viewBox="0 0 21 14" className="ml-[8px] h-[14px] w-[21px]"><path d="M5 3h14v10H4V8" fill="none" stroke="#111" strokeWidth="1.300" /><rect x="6" y="4.800" width="11.500" height="6.400" /><rect x="19.500" y="5.500" width="1.500" height="5" /><path d="M1 0v3M4 0v3M0 3h5v3H0zM2.500 6v5" stroke="#111" fill="none" /></svg>
      <svg viewBox="0 0 17 17" className="ml-[11px] h-[17px] w-[17px]" fill="none" stroke="#111" strokeWidth="1.200"><path d="M.7 16A15 15 0 0 1 15.500 1M4.500 16A11 11 0 0 1 15.500 5M8.300 16a7.500 7.500 0 0 1 7-7.300" /><circle cx="14" cy="14.500" r="1.700" fill="#111" stroke="none" /></svg>
      <svg viewBox="0 0 30 17" className="ml-[11px] h-[17px] w-[30px]" fill="none" stroke="#111"><rect x=".6" y=".6" width="28.800" height="15.800" rx="1" strokeWidth="1.200" /><path d="M4 5h22M4 8.500h22" strokeDasharray="1.500 2" strokeWidth="1.300" /><path d="M4 12.500h3M9 12.500h11M22.500 12.500h3" strokeWidth="1.300" /></svg>
      <span className="ml-[13px] w-[34px] text-[14px] tracking-[-0.2px]">ENG</span>
      <div className="ml-[5px] w-[90px] text-center text-[14.200px] leading-[23px] tracking-[-0.15px] whitespace-nowrap">11:47 AM<br />17-10-2021</div>
      <div className="relative ml-[15px] h-[20px] w-[20px]">
        <svg viewBox="0 0 20 20" className="h-5 w-5"><path d="M0 0h20v16.500H10L6.500 20v-3.500H0z" /><path d="M4 4.500h12M4 8h12M4 11.500h8" stroke="#fff" strokeWidth="1.200" /></svg>
        <div className="absolute top-[10px] left-[9px] flex h-5 w-5 items-center justify-center rounded-full border border-[#777] bg-[#cfcfcf] text-[13px] font-medium">2</div>
      </div>
      <div className="ml-[24px] h-[50px] w-px bg-[#bbb]" />
    </div>
  </footer>
);

export default function App() {
  return (
    <div className="flex h-[1080px] w-[1920px] flex-col overflow-hidden bg-[#f7f7f7] font-['Liberation_Sans',Arial,sans-serif]">
      <TabStrip />
      <Toolbar />
      <div className="flex h-[941px] shrink-0">
        <div className="flex w-[1899px] flex-col overflow-hidden">
          <Hero />
          <Controls />
          <main className="relative -mt-px flex h-[596px] shrink-0 pt-px pl-[187px]">
            <Wires />
            <DataColumn />
            <FeatureColumn />
            <Network />
            <Output />
          </main>
        </div>
        <div className="flex w-[21px] flex-col items-center bg-[#f1f1f1]">
          <div className="mt-[8px] h-0 w-0 border-x-[5px] border-b-[5px] border-x-transparent border-b-[#a0a0a0]" />
          <div className="mt-[8px] h-[252px] w-[17px] bg-[#c1c1c1]" />
        </div>
      </div>
      <Taskbar />
    </div>
  );
}
